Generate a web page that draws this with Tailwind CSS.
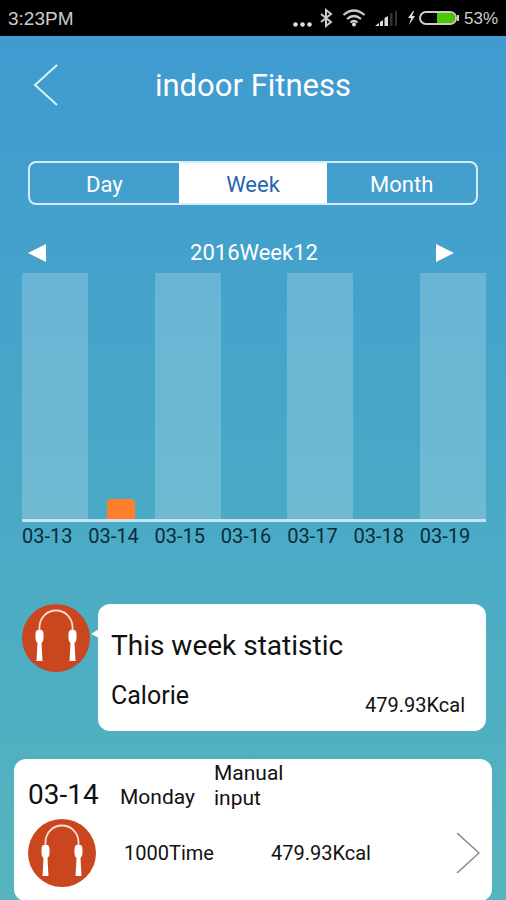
<!DOCTYPE html>
<html lang="en">
<head>
<meta charset="utf-8">
<meta name="viewport" content="width=device-width, initial-scale=1">
<title>indoor Fitness</title>
<script src="https://cdn.jsdelivr.net/npm/@tailwindcss/browser@4"></script>
</head>
<body class="flex min-h-screen flex-col bg-linear-to-b from-[#3f99d1] to-[#54b5bd] font-['Roboto','Noto_Sans',sans-serif] text-[#111]">
<svg class="hidden" aria-hidden="true">
  <symbol id="rope" viewBox="0 0 68 68">
    <circle cx="34" cy="34" r="34" fill="#c9461f"/>
    <path d="M17.500 27V23a16.500 16.500 0 0 1 33 0v4" fill="none" stroke="#f8ddd4" stroke-width="1.800"/>
    <g fill="#fff">
      <path id="grip" d="M15 26h5q1.500 1.500 1.500 4v5q0 2.500-2 4l1 18h-6l1-18q-2-1.500-2-4v-5q0-2.500 1.500-4z"/>
      <use href="#grip" x="33"/>
    </g>
  </symbol>
</svg>

<!-- Status bar -->
<div class="flex h-9 items-center justify-between bg-black px-2 pt-0.5 font-['Liberation_Sans',sans-serif] text-[#ccc]">
  <span class="text-[19px] leading-6">3:23PM</span>
  <div class="flex items-center gap-0.5">
    <svg class="h-6 w-[170px]" viewBox="0 0 170 24" fill="none" stroke="#ccc" aria-label="Bluetooth, Wi-Fi, signal, charging">
      <g fill="#ddd" stroke="none"><circle cx="3.500" cy="17.500" r="2.300"/><circle cx="10.500" cy="17.500" r="2.300"/><circle cx="17.500" cy="17.500" r="2.300"/></g>
      <path d="M29 7l10 8-5 4V3l5 4-10 8" stroke-width="2"/>
      <g stroke-width="2.200"><path d="M51.500 8q10.500-9 21 0M55 12q7-6 14 0M58.500 15.500q3.500-3 7 0"/></g>
      <circle cx="62" cy="17.500" r="2" fill="#ddd" stroke="none"/>
      <g fill="#ddd" stroke="none"><path d="M83 19l4-3v3zM88 15l3-2v6h-3zM92.500 11l3.500-2v10h-3.500z"/><path d="M98 6h2.500v13h-2.500zM103 4h2v15h-2z" fill="#333"/></g>
      <path d="M121 4l-5 7h3l-2 7 6-9h-3l2-5z" fill="#ddd" stroke="none"/>
      <rect x="128" y="5" width="36" height="12" rx="6" stroke-width="2"/>
      <path d="M145 6h13a5 5 0 0 1 0 10h-13z" fill="#4cc800" stroke="none"/>
      <path d="M166 8v6" stroke-width="2"/>
    </svg>
    <span class="text-[17px] leading-6">53%</span>
  </div>
</div>

<!-- Title -->
<header class="grid h-[100px] grid-cols-[1fr_auto_1fr] items-center px-8 text-white">
  <button type="button" aria-label="Back" class="justify-self-start">
    <svg class="h-11 w-7" viewBox="0 0 28 44" fill="none" stroke="#d8f5ee" stroke-width="2"><path d="M25 1L3 21l22 20"/></svg>
  </button>
  <h1 class="text-[31px] leading-10">indoor Fitness</h1>
</header>

<main class="flex flex-1 flex-col">
  <div class="px-7 pt-[25px]">
    <div class="grid h-11 grid-cols-3 overflow-hidden rounded-lg border-2 border-[#d5ecfa] text-[22px] text-white">
      <button type="button" class="pt-0.5">Day</button>
      <button type="button" aria-pressed="true" class="bg-white pt-0.5 text-[#2865b0]">Week</button>
      <button type="button" class="pt-0.5">Month</button>
    </div>
  </div>

  <section class="pr-5 pl-[22px] pt-[30px]">
    <div class="grid h-[38px] grid-cols-[1fr_auto_1fr] items-center pb-0.5 text-white">
      <button type="button" aria-label="Previous week" class="justify-self-start pl-1.5"><svg class="h-5 w-[18px]" viewBox="0 0 18 20" fill="#fff"><path d="M0 10L18 1v18z"/></svg></button>
      <h2 class="text-[22px] leading-7">2016Week12</h2>
      <button type="button" aria-label="Next week" class="justify-self-end pr-8"><svg class="h-5 w-[18px]" viewBox="0 0 18 20" fill="#fff"><path d="M18 10L0 1v18z"/></svg></button>
    </div>
    <div class="grid h-[249px] grid-cols-7 items-stretch border-b-3 border-[#c5e2ee]">
      <div class="bg-white/20"></div>
      <div class="flex items-end justify-center"><div class="h-5 w-7 rounded-t bg-[#ff7f2c]"></div></div>
      <div class="bg-white/20"></div>
      <div></div>
      <div class="bg-white/20"></div>
      <div></div>
      <div class="bg-white/20"></div>
    </div>
    <div class="grid grid-cols-7 text-[20px] leading-7 text-[#0c2c3a]">
      <span>03-13</span><span>03-14</span><span>03-15</span><span>03-16</span><span>03-17</span><span>03-18</span><span>03-19</span>
    </div>
  </section>

  <section class="flex items-start gap-2 pt-[54px] pr-5 pl-[22px]">
    <svg class="size-[68px] shrink-0" aria-hidden="true"><use href="#rope"/></svg>
    <div class="relative flex-1 rounded-xl bg-white px-[13px] pt-6 pb-3">
      <svg class="absolute top-6 -left-[7px] h-3 w-2" viewBox="0 0 8 12" fill="#fff" aria-hidden="true"><path d="M0 6l8-5v9z"/></svg>
      <h2 class="text-[28px] leading-9">This week statistic</h2>
      <div class="flex items-end justify-between pt-4 pr-2">
        <span class="pb-[7px] text-[25px] leading-8">Calorie</span>
        <span class="text-[20px] leading-7">479.93Kcal</span>
      </div>
    </div>
  </section>

  <a href="#" class="mx-3.5 mt-7 block rounded-xl bg-white pt-0.5 pb-3.5">
    <div class="flex items-start text-[21px] leading-[25px]">
      <span class="w-[106px] pt-4 pl-3.5 text-[28px] leading-9">03-14</span>
      <span class="w-[94px] pt-6">Monday</span>
      <span class="w-20">Manual input</span>
    </div>
    <div class="flex items-center pt-1.5 pr-3 pl-3.5 text-[20px] leading-7">
      <svg class="size-[68px] shrink-0" aria-hidden="true"><use href="#rope"/></svg>
      <span class="w-[175px] pl-7">1000Time</span>
      <span class="flex-1">479.93Kcal</span>
      <svg class="h-10 w-6" viewBox="0 0 24 40" fill="none" stroke="#888" stroke-width="1.500" aria-hidden="true"><path d="M1 0l22 20L1 40"/></svg>
    </div>
  </a>
</main>
</body>
</html>
